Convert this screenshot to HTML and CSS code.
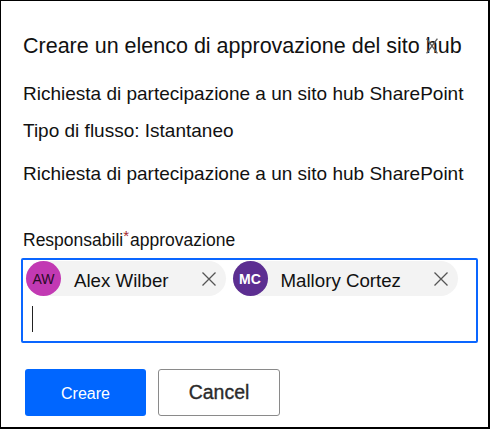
FILE: index.html
```html
<!DOCTYPE html>
<html lang="it">
<head>
<meta charset="utf-8">
<title>Creare un elenco di approvazione</title>
<link rel="stylesheet" href="styles.css">
</head>
<body>
<div class="dialog">
  <h1 class="title">Creare un elenco di approvazione del sito hub</h1>
  <button class="dismiss" aria-label="Chiudi">
    <svg width="12" height="16" viewBox="0 0 12 16"><path d="M0.6 0.6 L11.4 15.4 M11.4 0.6 L0.6 15.4" stroke="#5f5f5f" stroke-width="1.4" fill="none"/></svg>
  </button>
  <p class="line l2">Richiesta di partecipazione a un sito hub SharePoint</p>
  <p class="line l3">Tipo di flusso: Istantaneo</p>
  <p class="line l4">Richiesta di partecipazione a un sito hub SharePoint</p>
  <div class="label">Responsabili<span class="req">*</span>approvazione</div>
  <div class="picker">
    <div class="chips">
      <div class="chip">
        <span class="avatar aw">AW</span>
        <span class="name">Alex Wilber</span>
        <span class="remove"><svg width="14" height="14" viewBox="0 0 14 14"><path d="M0.5 0.5 L13.5 13.5 M13.5 0.5 L0.5 13.5" stroke="#555" stroke-width="1.3" fill="none"/></svg></span>
      </div>
      <div class="chip">
        <span class="avatar mc">MC</span>
        <span class="name">Mallory Cortez</span>
        <span class="remove"><svg width="14" height="14" viewBox="0 0 14 14"><path d="M0.5 0.5 L13.5 13.5 M13.5 0.5 L0.5 13.5" stroke="#555" stroke-width="1.3" fill="none"/></svg></span>
      </div>
    </div>
    <div class="caret-row"><span class="caret"></span></div>
  </div>
  <div class="actions">
    <button class="btn primary">Creare</button>
    <button class="btn secondary">Cancel</button>
  </div>
</div>
</body>
</html>
```
FILE: styles.css
```css
html, body {
  margin: 0;
  padding: 0;
  background: #fff;
}
.dialog {
  position: relative;
  box-sizing: border-box;
  width: 490px;
  height: 429px;
  border-style: solid;
  border-color: #000;
  border-width: 1px 2px 2px 1px;
  padding: 30.5px 0 0 22px;
  font-family: "Liberation Sans", Arial, sans-serif;
  color: #111;
}
.title {
  margin: 0;
  font-size: 21.5px;
  line-height: 28px;
  font-weight: normal;
  color: #111;
}
.dismiss {
  position: absolute;
  left: 425px;
  top: 37px;
  width: 12px;
  height: 16px;
  padding: 0;
  border: 0;
  background: transparent;
  display: block;
}
.dismiss svg { display: block; }
.line {
  margin: 0;
  font-size: 19px;
  line-height: 24px;
}
.l2 { margin-top: 22px; }
.l3 { margin-top: 13px; }
.l4 { margin-top: 19px; }
.label {
  margin-top: 43.5px;
  font-size: 17.5px;
  line-height: 22px;
}
.req {
  color: #a4262c;
  font-size: 15px;
  vertical-align: 5px;
  line-height: 0;
  margin: 0 1px 0 0;
}
.picker {
  margin: 7px 0 0 -2px;
  box-sizing: border-box;
  width: 457px;
  height: 85px;
  border: 2px solid #0a66ff;
  border-radius: 2px;
  padding: 1px 0 0 3px;
}
.chips {
  display: flex;
  gap: 7px;
}
.chip {
  display: flex;
  align-items: center;
  height: 35px;
  border-radius: 18px;
  background: #f3f3f3;
}
.avatar {
  width: 35px;
  height: 35px;
  border-radius: 50%;
  display: flex;
  align-items: center;
  justify-content: center;
  font-size: 14px;
  flex: none;
}
.aw { background: #c239b3; color: #2a0a26; }
.mc { background: #5c2e91; color: #fff; font-weight: bold; }
.name {
  margin-left: 13px;
  margin-right: 23px;
  padding-top: 4px;
  font-size: 18.7px;
  color: #111;
  white-space: nowrap;
}
.remove {
  width: 34px;
  height: 35px;
  display: flex;
  align-items: center;
  justify-content: center;
}
.remove svg { display: block; }
.caret-row {
  padding: 10px 0 0 6px;
}
.caret {
  display: block;
  width: 1px;
  height: 26px;
  background: #222;
}
.actions {
  display: flex;
  gap: 12px;
  margin: 26px 0 0 2px;
}
.btn {
  box-sizing: border-box;
  height: 47px;
  width: 122px;
  border-radius: 3px;
  font-family: "Liberation Sans", Arial, sans-serif;
  padding: 0;
}
.primary {
  width: 121px;
  background: #0066ff;
  border: 0;
  color: #fff;
  font-size: 16px;
  padding-top: 2px;
}
.secondary {
  background: #fff;
  border: 1px solid #8a8a8a;
  color: #2b2b2b;
  font-size: 19.5px;
  -webkit-text-stroke: 0.35px #2b2b2b;
}
```
